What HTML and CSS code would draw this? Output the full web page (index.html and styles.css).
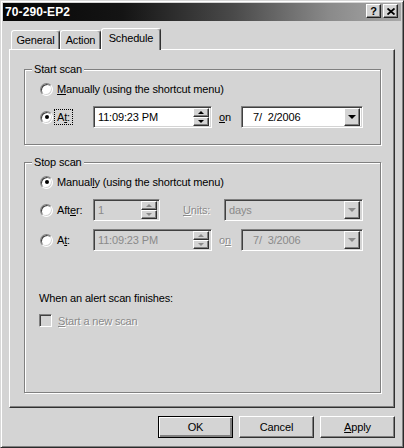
FILE: index.html
```html
<!DOCTYPE html>
<html>
<head>
<meta charset="utf-8">
<link rel="stylesheet" href="styles.css">
</head>
<body>
<div class="window">
  <div class="titlebar">
    <span class="title">70-290-EP2</span>
    <div class="caption-btns">
      <span class="cap-btn">?</span>
      <span class="cap-btn"><svg width="8" height="7" viewBox="0 0 8 7"><path d="M0.5 0.5 L7.5 6.5 M7.5 0.5 L0.5 6.5" stroke="#000" stroke-width="1.8" fill="none"/></svg></span>
    </div>
  </div>
  <div class="body">
    <div class="tabs">
      <div class="tab tab-general">General</div>
      <div class="tab tab-action">Action</div>
      <div class="tab tab-schedule active">Schedule</div>
    </div>
    <div class="panel">
      <div class="group group-start">
        <div class="group-head"><span class="group-title">Start scan</span></div>
        <div class="row row-first">
          <span class="radio"></span><span class="label"><u>M</u>anually (using the shortcut menu)</span>
        </div>
        <div class="row row-next">
          <div class="lead"><span class="radio checked"></span><span class="label focus">A<u>t</u>:</span></div>
          <div class="field field-time"><span class="val">11:09:23 PM</span>
            <div class="spin"><span class="spin-btn"><i class="up"></i></span><span class="spin-btn"><i class="down"></i></span></div>
          </div>
          <span class="on"><u>o</u>n</span>
          <div class="field field-date"><span class="val date">7/&nbsp; 2/2006</span><span class="drop"><i class="tri"></i></span></div>
        </div>
      </div>

      <div class="group group-stop">
        <div class="group-head"><span class="group-title">Stop scan</span></div>
        <div class="row row-first">
          <span class="radio checked"></span><span class="label">Manual<u>l</u>y (using the shortcut menu)</span>
        </div>
        <div class="row row-next">
          <div class="lead"><span class="radio"></span><span class="label">Aft<u>e</u>r:</span></div>
          <div class="field field-num disabled"><span class="val">1</span>
            <div class="spin"><span class="spin-btn"><i class="up"></i></span><span class="spin-btn"><i class="down"></i></span></div>
          </div>
          <span class="units dim"><u>U</u>nits:</span>
          <div class="field field-units disabled"><span class="val">days</span><span class="drop"><i class="tri"></i></span></div>
        </div>
        <div class="row row-third">
          <div class="lead"><span class="radio"></span><span class="label">A<u>t</u>:</span></div>
          <div class="field field-time disabled"><span class="val">11:09:23 PM</span>
            <div class="spin"><span class="spin-btn"><i class="up"></i></span><span class="spin-btn"><i class="down"></i></span></div>
          </div>
          <span class="on dim">o<u>n</u></span>
          <div class="field field-date disabled"><span class="val date">7/&nbsp; 3/2006</span><span class="drop"><i class="tri"></i></span></div>
        </div>
        <div class="alert-text">When an alert scan finishes:</div>
        <div class="check-row">
          <span class="checkbox"></span><span class="label dim"><u>S</u>tart a new scan</span>
        </div>
      </div>
    </div>
    <div class="buttons">
      <span class="btn default">OK</span>
      <span class="btn">Cancel</span>
      <span class="btn"><u>A</u>pply</span>
    </div>
  </div>
</div>
</body>
</html>
```

FILE: styles.css
```css
* { box-sizing: border-box; }

html, body {
  margin: 0;
  padding: 0;
  background: #d4d4d4;
}

body {
  font-family: "Liberation Sans", Arial, sans-serif;
  font-size: 11px;
  letter-spacing: -0.15px;
  color: #000;
}

u { text-decoration: underline; text-underline-offset: 1px; }

.window {
  width: 404px;
  height: 448px;
  background: #d4d4d4;
  border: 1px solid;
  border-color: #d8d8d8 #2a2a2a #2a2a2a #d8d8d8;
  box-shadow: inset 1px 1px 0 #fff, inset -1px -1px 0 #808080;
  padding: 2px;
  display: flex;
  flex-direction: column;
}

.titlebar {
  height: 18px;
  background: linear-gradient(to right, #060606 0%, #141414 30%, #4a4a4a 58%, #8a8a8a 82%, #a8a8a8 100%);
  display: flex;
  align-items: flex-start;
  justify-content: space-between;
  padding: 1px 3px 0 2px;
}

.title {
  color: #fff;
  font-weight: bold;
  font-size: 12px;
  letter-spacing: 0.1px;
  line-height: 16px;
}

.caption-btns {
  display: flex;
  gap: 2px;
}

.cap-btn {
  width: 15px;
  height: 14px;
  background: #d4d4d4;
  border: 1px solid;
  border-color: #fff #202020 #202020 #fff;
  box-shadow: inset -1px -1px 0 #808080;
  display: flex;
  align-items: center;
  justify-content: center;
  font-weight: bold;
  font-size: 11px;
  line-height: 12px;
  letter-spacing: 0;
}

.body {
  flex: 1;
  padding: 7px 6px 0 6px;
  display: flex;
  flex-direction: column;
}

.tabs {
  height: 21px;
  display: flex;
  align-items: flex-end;
  padding-left: 2px;
}

.tab {
  height: 19px;
  border: 1px solid;
  border-bottom: none;
  border-color: #fff #303030 transparent #fff;
  border-radius: 3px 3px 0 0;
  box-shadow: inset -1px 0 0 #808080;
  text-align: center;
  line-height: 18px;
  background: #d4d4d4;
}

.tab-general { width: 49px; }
.tab-action { width: 41px; }
.tab-schedule { width: 60px; }

.tab.active {
  height: 22px;
  margin-bottom: -1px;
  position: relative;
  z-index: 1;
  line-height: 19px;
}

.panel {
  height: 359px;
  border: 1px solid;
  border-color: #fff #303030 #303030 #fff;
  box-shadow: inset -1px -1px 0 #808080;
  display: flex;
  flex-direction: column;
}

.group {
  margin: 0 13px 0 14px;
  border: 1px solid #808080;
  box-shadow: inset 1px 1px 0 #fff, 1px 1px 0 #fff;
  padding: 0 0 0 15px;
}

.group-start {
  margin-top: 19px;
  padding-bottom: 16px;
}

.group-stop {
  margin-top: 17px;
  padding-bottom: 64px;
}

.group-head {
  height: 13px;
  margin-top: -7px;
  display: flex;
  padding-left: 7px;
  margin-left: -15px;
}

.group-title {
  padding: 0 2px;
  line-height: 13px;
  height: 13px;
  background: #d4d4d4;
}

.row {
  height: 22px;
  display: flex;
  align-items: center;
}

.row-first { margin-top: 2px; }
.row-next { margin-top: 6px; }
.row-third { margin-top: 8px; }

.lead {
  width: 53px;
  display: flex;
  align-items: center;
}

.radio {
  width: 13px;
  height: 13px;
  flex: none;
  border-radius: 50%;
  border: 1px solid;
  border-color: #808080 #fff #fff #808080;
  box-shadow: inset 1px 1px 0 #404040, inset -1px -1px 0 #d4d4d4;
  background: #fff;
  display: flex;
  align-items: center;
  justify-content: center;
}

.radio.checked::after {
  content: "";
  width: 4px;
  height: 4px;
  border-radius: 50%;
  background: #000;
}

.label {
  margin-left: 4px;
  line-height: 14px;
  white-space: nowrap;
}

.label.focus {
  margin-left: 1px;
  padding: 0 2px;
  border: 1px dotted #000;
}

.field {
  height: 22px;
  border: 1px solid;
  border-color: #808080 #fff #fff #808080;
  box-shadow: inset 1px 1px 0 #404040, inset -1px -1px 0 #d4d4d4;
  background: #fff;
  padding: 2px;
  display: flex;
  align-items: center;
  white-space: nowrap;
}

.field.disabled {
  background: #d4d4d4;
  color: #8a8a8a;
}

.val { padding-left: 2px; flex: 1; }
.val.date { padding-left: 9px; }

.field-time { width: 119px; }
.field-date { width: 122px; }
.field-num { width: 67px; }
.field-units { width: 139px; }

.spin {
  width: 16px;
  height: 18px;
  display: flex;
  flex-direction: column;
}

.spin-btn, .drop {
  background: #d4d4d4;
  border: 1px solid;
  border-color: #fff #303030 #303030 #fff;
  box-shadow: inset -1px -1px 0 #808080;
  display: flex;
  align-items: center;
  justify-content: center;
}

.spin-btn { flex: 1; }

.drop {
  width: 16px;
  height: 18px;
}

.up {
  width: 0; height: 0;
  border-left: 3px solid transparent;
  border-right: 3px solid transparent;
  border-bottom: 3px solid #000;
}

.down {
  width: 0; height: 0;
  border-left: 3px solid transparent;
  border-right: 3px solid transparent;
  border-top: 3px solid #000;
}

.tri {
  width: 0; height: 0;
  border-left: 4px solid transparent;
  border-right: 4px solid transparent;
  border-top: 4px solid #000;
}

.disabled .up { border-bottom-color: #8a8a8a; }
.disabled .down { border-top-color: #8a8a8a; }
.disabled .tri { border-top-color: #8a8a8a; }

.on {
  margin-left: 7px;
  width: 22px;
}

.units {
  margin-left: 23px;
  width: 41px;
}

.dim {
  color: #8a8a8a;
  text-shadow: 1px 1px 0 #fff;
}

.alert-text {
  margin-top: 40px;
  line-height: 14px;
  margin-left: -1px;
}

.check-row {
  margin-top: 8px;
  height: 15px;
  display: flex;
  align-items: center;
  margin-left: -1px;
}

.checkbox {
  width: 13px;
  height: 13px;
  border: 1px solid;
  border-color: #808080 #fff #fff #808080;
  box-shadow: inset 1px 1px 0 #404040, inset -1px -1px 0 #d4d4d4;
  background: #d4d4d4;
}

.check-row .label { margin-left: 6px; }

.buttons {
  margin-top: 8px;
  display: flex;
  justify-content: flex-end;
  gap: 6px;
}

.btn {
  width: 75px;
  height: 22px;
  border: 1px solid;
  border-color: #fff #303030 #303030 #fff;
  box-shadow: inset -1px -1px 0 #808080;
  display: flex;
  align-items: center;
  justify-content: center;
}

.btn.default {
  border: 1px solid #000;
  box-shadow: inset 1px 1px 0 #fff, inset -2px -2px 0 #808080, inset -1px -1px 0 #303030;
}
```
